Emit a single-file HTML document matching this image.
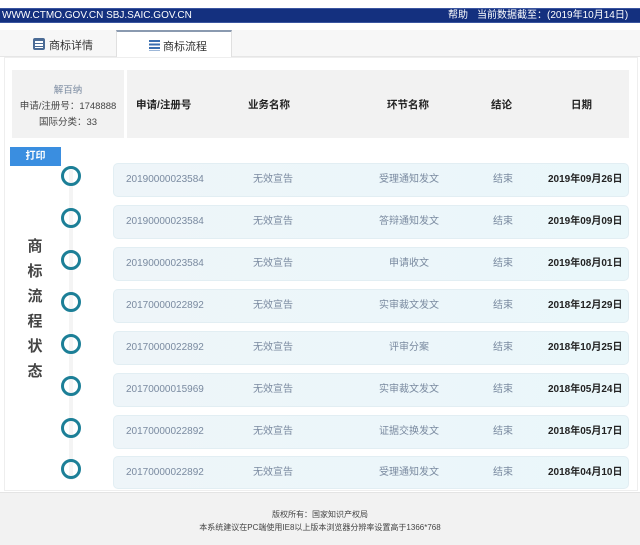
<!DOCTYPE html>
<html><head><meta charset="utf-8"><style>
*{margin:0;padding:0;box-sizing:border-box}
body{width:640px;height:545px;position:relative;background:#fff;font-family:"Liberation Sans","Noto Sans CJK SC",sans-serif;overflow:hidden}
.a{position:absolute}
.top{left:0;top:8px;width:640px;height:15px;background:#14307f;color:#fff;font-size:10px;line-height:14px;border-top:1px solid #3a55a0;border-bottom:1px solid #3a55a0;white-space:nowrap}
.tabs{left:0;top:30px;width:640px;height:27px;background:#f7f7f7;border-bottom:1px solid #e6e6e6}
.tab2{left:116px;top:30px;width:116px;height:28px;background:#fff;border-top:2px solid #8a9ab0;border-left:1px solid #e0e0e0;border-right:1px solid #e0e0e0}
.panel{left:4px;top:57px;width:634px;height:434px;background:#fff;border:1px solid #eee}
.row{left:113px;width:516px;height:34px;border-radius:5px;background:linear-gradient(90deg,#eef5f9,#eaf7fa);border:1px solid #e2eef3;font-size:10px;color:#7a8aa0}
.row span{position:absolute;top:0;line-height:32px;height:32px}
.c{width:20px;height:20px;border:3.5px solid #1c7f97;border-radius:50%;left:61px}
.hd{font-size:10.5px;font-weight:bold;color:#222;position:absolute;top:97px}
</style></head><body>
<div class="a top"><span style="margin-left:2px">WWW.CTMO.GOV.CN SBJ.SAIC.GOV.CN</span><span class="a" style="left:448px;top:0">帮助</span><span class="a" style="left:477px;top:0">当前数据截至：(2019年10月14日)</span></div>
<div class="a tabs"></div>
<div class="a" style="left:33px;top:38px;width:12px;height:12px;border:2px solid #4b6b95;border-radius:2px;background:repeating-linear-gradient(#4b6b95 0 1px,#fff 1px 3px)"></div>
<div class="a" style="left:49px;top:37px;font-size:11px;color:#333">商标详情</div>
<div class="a tab2"></div>
<div class="a" style="left:149px;top:40px;width:11px;height:11px;background:repeating-linear-gradient(#3b6fb0 0 2px,#fff 2px 3.5px)"></div>
<div class="a" style="left:163px;top:38px;font-size:11px;color:#333">商标流程</div>
<div class="a panel"></div>
<div class="a" style="left:12px;top:70px;width:112px;height:68px;background:#f2f2f2"></div>
<div class="a" style="left:127px;top:70px;width:502px;height:68px;background:#f2f2f2"></div>
<div class="a" style="left:12px;top:82px;width:112px;text-align:center;font-size:9.5px;color:#7a8aa0">解百纳</div>
<div class="a" style="left:12px;top:98px;width:112px;text-align:center;font-size:9.5px;color:#444">申请/注册号：1748888</div>
<div class="a" style="left:12px;top:114px;width:112px;text-align:center;font-size:9.5px;color:#444">国际分类：33</div>
<div class="hd" style="left:136px">申请/注册号</div>
<div class="hd" style="left:248px">业务名称</div>
<div class="hd" style="left:387px">环节名称</div>
<div class="hd" style="left:491px">结论</div>
<div class="hd" style="left:571px">日期</div>
<div class="a" style="left:10px;top:147px;width:51px;height:19px;background:#3a8ee0;color:#fff;font-size:10px;font-weight:bold;text-align:center;line-height:19px">打印</div>
<div class="a" style="left:69px;top:170px;width:4px;height:310px;background:#f4f4f4"></div>
<div class="a" style="left:26px;top:234px;width:18px;font-size:15px;font-weight:bold;color:#444;line-height:25px;text-align:center">商标流程状态</div>

<div class="a c" style="top:166px"></div><div class="a row" style="top:163px"><span style="left:12px">20190000023584</span><span style="left:139px">无效宣告</span><span style="left:265px">受理通知发文</span><span style="left:379px">结束</span><span style="left:434px;color:#222;font-weight:bold">2019年09月26日</span></div>
<div class="a c" style="top:208px"></div><div class="a row" style="top:205px"><span style="left:12px">20190000023584</span><span style="left:139px">无效宣告</span><span style="left:265px">答辩通知发文</span><span style="left:379px">结束</span><span style="left:434px;color:#222;font-weight:bold">2019年09月09日</span></div>
<div class="a c" style="top:250px"></div><div class="a row" style="top:247px"><span style="left:12px">20190000023584</span><span style="left:139px">无效宣告</span><span style="left:275px">申请收文</span><span style="left:379px">结束</span><span style="left:434px;color:#222;font-weight:bold">2019年08月01日</span></div>
<div class="a c" style="top:292px"></div><div class="a row" style="top:289px"><span style="left:12px">20170000022892</span><span style="left:139px">无效宣告</span><span style="left:265px">实审裁文发文</span><span style="left:379px">结束</span><span style="left:434px;color:#222;font-weight:bold">2018年12月29日</span></div>
<div class="a c" style="top:334px"></div><div class="a row" style="top:331px"><span style="left:12px">20170000022892</span><span style="left:139px">无效宣告</span><span style="left:275px">评审分案</span><span style="left:379px">结束</span><span style="left:434px;color:#222;font-weight:bold">2018年10月25日</span></div>
<div class="a c" style="top:376px"></div><div class="a row" style="top:373px"><span style="left:12px">20170000015969</span><span style="left:139px">无效宣告</span><span style="left:265px">实审裁文发文</span><span style="left:379px">结束</span><span style="left:434px;color:#222;font-weight:bold">2018年05月24日</span></div>
<div class="a c" style="top:418px"></div><div class="a row" style="top:415px"><span style="left:12px">20170000022892</span><span style="left:139px">无效宣告</span><span style="left:265px">证据交换发文</span><span style="left:379px">结束</span><span style="left:434px;color:#222;font-weight:bold">2018年05月17日</span></div>
<div class="a c" style="top:459px"></div><div class="a row" style="top:456px;height:33px"><span style="left:12px">20170000022892</span><span style="left:139px">无效宣告</span><span style="left:265px">受理通知发文</span><span style="left:379px">结束</span><span style="left:434px;color:#222;font-weight:bold">2018年04月10日</span></div>

<div class="a" style="left:0;top:492px;width:640px;height:53px;background:#f2f2f2;border-top:1px solid #e4e4e4"></div>
<div class="a" style="left:0;top:509px;width:640px;text-align:center;font-size:8px;color:#444">版权所有：国家知识产权局</div>
<div class="a" style="left:0;top:522px;width:640px;text-align:center;font-size:8px;color:#444">本系统建议在PC端使用IE8以上版本浏览器分辨率设置高于1366*768</div>
</body></html>
